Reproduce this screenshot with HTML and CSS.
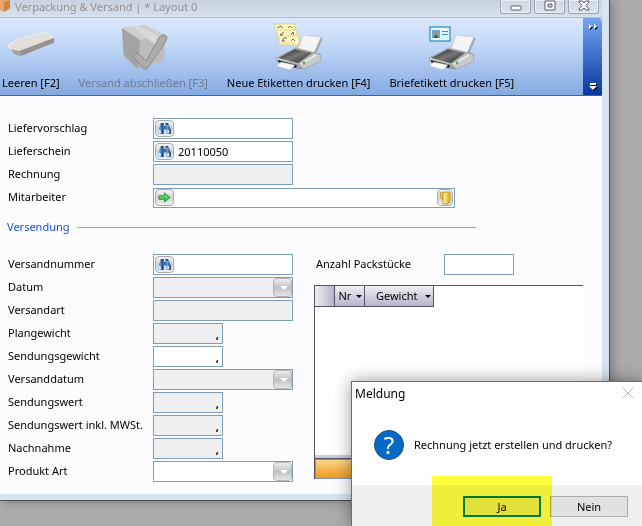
FILE: index.html
```
<!DOCTYPE html>
<html lang="de">
<head>
<meta charset="utf-8">
<title>Verpackung &amp; Versand</title>
<link rel="stylesheet" href="styles.css">
</head>
<body>
<svg class="defs" aria-hidden="true">
  <defs>
    <linearGradient id="side" x1="0" y1="0" x2="1" y2="1"><stop offset="0" stop-color="#f4f4f4"/><stop offset="1" stop-color="#7d7d7d"/></linearGradient>
    <linearGradient id="glass" x1="0" y1="0" x2="1" y2="1"><stop offset="0" stop-color="#1d1d1d"/><stop offset=".5" stop-color="#777"/><stop offset="1" stop-color="#222"/></linearGradient>
    <linearGradient id="barrel" x1="0" y1="0" x2="1" y2="0"><stop offset="0" stop-color="#b9d3e8"/><stop offset=".4" stop-color="#5f93c4"/><stop offset="1" stop-color="#1b4170"/></linearGradient>
    <linearGradient id="gold" x1="0" y1="0" x2="1" y2="0"><stop offset="0" stop-color="#fff7a8"/><stop offset="1" stop-color="#e9b91e"/></linearGradient>
    <linearGradient id="green" x1="0" y1="0" x2="0" y2="1"><stop offset="0" stop-color="#8ee58a"/><stop offset="1" stop-color="#1fae35"/></linearGradient>
    <symbol id="printer" viewBox="0 0 48 36">
      <path d="M29 1 48 3 41 19 24 15Z" fill="#777" opacity=".5"/>
      <path d="M28 0 46 2 39 18 23 14Z" fill="#f5f5f5" stroke="#bdbdbd" stroke-width=".6"/>
      <path d="M1 23 21 13 45 19 46 26 28 34 21 33 2 26Z" fill="url(#side)" stroke="#777" stroke-width=".5"/>
      <path d="M3 23 20 14 37 18 23 28Z" fill="url(#glass)"/>
      <path d="M24 29 40 18 45 20 46 26 28 34Z" fill="#c9c9c9"/>
      <path d="M26 29 41 20" stroke="#f8f8f8" stroke-width="1.3"/>
      <path d="M3 25 22 30 21 33 3 27Z" fill="#222"/>
      <path d="M6 27 20 30 15 35 1 31Z" fill="#fafafa" stroke="#aaa" stroke-width=".5"/>
      <circle cx="29" cy="28" r="1.400" fill="#61a650"/>
    </symbol>
    <symbol id="binoculars" viewBox="0 0 16 14">
      <path d="M4 2 5 1h2v12H1V8z" fill="url(#barrel)"/>
      <path d="M9 1h2l1 1 3 6v5h-5z" fill="url(#barrel)"/>
      <path d="M7 4h3v4H7z" fill="#2d669c"/>
      <path d="M4 1h3v2H4zM9 1h3v2H9z" fill="#1f4e80"/>
      <path d="M2 9h2v3H2zM11 9h2v3h-2z" fill="#edf5fb"/>
      <path d="M5 8h2v5H5z" fill="#1c52d4"/>
    </symbol>
  </defs>
</svg>

<main class="window">
  <header class="titlebar">
    <svg class="app-icon" viewBox="0 0 10 12" aria-hidden="true"><path d="M0 0h10v8l-6 4-4-2z" fill="#e8a66c"/><path d="M4 2 10 0v8l-6 4z" fill="#d18344"/></svg>
    <h1>Verpackung &amp; Versand | * Layout 0</h1>
    <div class="controls">
      <button type="button" aria-label="Minimieren"><svg viewBox="0 0 14 12"><rect x="2" y="6" width="10" height="4" rx="1"/></svg></button>
      <button type="button" aria-label="Maximieren"><svg viewBox="0 0 14 12"><path d="M2 1h10v9H2zM5 4v3h4V4z" fill-rule="evenodd"/></svg></button>
      <button type="button" aria-label="Schließen"><svg viewBox="0 0 14 12"><path d="M2 1h3l2 2 2-2h3v1L9 5.500 12 9v1H9L7 8l-2 2H2V9l3-3.500L2 2z"/></svg></button>
    </div>
  </header>

  <div class="toolbar">
    <div class="tools">
      <button type="button" class="tool">
        <svg viewBox="0 0 50 50"><path d="M2 24 33 10 49 16 18 32Z" fill="#777" opacity=".25"/><path d="M2 22 11 17 38 9 48 15 16 28 3 25Z" fill="#e2deda" stroke="#f6f3ef" stroke-width=".8"/><path d="M5 26 13 28 48 15 48 20 14 33 8 31Z" fill="#a5a19c"/><path d="M14 28 48 15 48 19 15 33Z" fill="#96938f"/></svg>
        <span>Leeren [F2]</span>
      </button>
      <button type="button" class="tool" disabled>
        <svg viewBox="0 0 50 50"><path d="M4 5 27 2 47 12 46 38 20 46 5 33Z" fill="#bcbcbc"/><path d="M4 5 27 2 47 12 22 17Z" fill="#cecece"/><path d="M4 5 22 17 20 46 6 33Z" fill="#a3a3a3"/><path d="M15 4 21 3 40 13 38 22 31 17Z" fill="#d9d9d9"/><path d="M16 32Q19 28 23 33L28 38 41 15Q45 9 49 14Q49 17 46 21L31 43Q28 48 25 45L17 36Q14 34 16 32Z" fill="#acacac" stroke="#8a8a8a"/></svg>
        <span>Versand abschließen [F3]</span>
      </button>
      <button type="button" class="tool">
        <svg viewBox="0 0 50 50"><g fill="#fff8bc" stroke="#cbbd7d" stroke-width=".6"><rect x="1" y="1" width="20" height="9"/><rect x="3" y="7" width="20" height="9"/><rect x="5" y="13" width="20" height="9"/></g><path d="M3 5l4-2 2 2M14 5l2-2 2 2M6 12l4-3M6 12h3M17 12l2-3 1 3M8 18l2-3h3M8 18h3M17 18l2-2 2 2" fill="none" stroke="#41426f" stroke-width=".8"/><path d="M7 20h14" stroke="#dab67a" stroke-width=".6"/><use href="#printer" x="1" y="12" width="48" height="36"/></svg>
        <span>Neue Etiketten drucken [F4]</span>
      </button>
      <button type="button" class="tool">
        <svg viewBox="0 0 50 50"><use href="#printer" x="1" y="12" width="48" height="36"/><rect x="3" y="4" width="20" height="14" fill="#e2f4fc" stroke="#087ba7"/><rect x="5" y="7" width="8" height="8" fill="#65add0"/><circle cx="9" cy="10" r="2" fill="#b68865"/><path d="M7 15q0-3 2-3t2 3z" fill="#405471"/><path d="M15 8.500h6M15 11.500h6" stroke="#3493c3"/></svg>
        <span>Briefetikett drucken [F5]</span>
      </button>
    </div>
    <button type="button" class="overflow" aria-label="Weitere Schaltflächen">
      <svg viewBox="0 0 8 5"><path d="M0 0 3 2.500 0 5zM5 0 8 2.500 5 5z"/></svg>
      <svg viewBox="0 0 8 8"><path d="M1 0h6v2H1zM0 3h8L4 7z"/></svg>
    </button>
  </div>

  <form class="content">
    <div class="fields">
      <label for="vorschlag">Liefervorschlag</label>
      <div class="field"><button type="button" class="mini" aria-label="Liefervorschlag suchen"><svg><use href="#binoculars"/></svg></button><input id="vorschlag"></div>
      <label for="lieferschein">Lieferschein</label>
      <div class="field"><button type="button" class="mini" aria-label="Lieferschein suchen"><svg><use href="#binoculars"/></svg></button><input id="lieferschein" value="20110050"></div>
      <label for="rechnung">Rechnung</label>
      <div class="field off"><input id="rechnung" readonly></div>
      <label for="mitarbeiter">Mitarbeiter</label>
      <div class="field wide"><button type="button" class="mini" aria-label="Mitarbeiter öffnen"><svg viewBox="0 0 16 14"><path d="M2 5h6V2l6 5-6 5V9H2z" fill="url(#green)" stroke="#168a2a" stroke-width=".8"/></svg></button><input id="mitarbeiter"><button type="button" class="mini narrow" aria-label="Mitarbeiter wählen"><svg viewBox="0 0 12 14"><path d="M1 2 4 1v7L2 7z" fill="#f6dd60" stroke="#b58a0c" stroke-width=".8"/><path d="M4 3 6 1h5v10l-2 2H4z" fill="url(#gold)" stroke="#b58a0c" stroke-width=".8"/><path d="M9 3v10" stroke="#c79d17" stroke-width=".6"/></svg></button></div>
    </div>

    <h2>Versendung</h2>

    <div class="shipping">
      <div class="fields">
        <label for="nummer">Versandnummer</label>
        <div class="field"><button type="button" class="mini" aria-label="Versandnummer suchen"><svg><use href="#binoculars"/></svg></button><input id="nummer"></div>
        <label for="datum">Datum</label>
        <div class="field off drop"><select id="datum"><option></option></select></div>
        <label for="versandart">Versandart</label>
        <div class="field off"><input id="versandart" readonly></div>
        <label for="plan">Plangewicht</label>
        <div class="field off number"><input id="plan" value="," readonly></div>
        <label for="gewicht">Sendungsgewicht</label>
        <div class="field number"><input id="gewicht" value=","></div>
        <label for="versanddatum">Versanddatum</label>
        <div class="field off drop"><select id="versanddatum"><option></option></select></div>
        <label for="wert">Sendungswert</label>
        <div class="field off number"><input id="wert" value="," readonly></div>
        <label for="brutto">Sendungswert inkl. MWSt.</label>
        <div class="field off number"><input id="brutto" value="," readonly></div>
        <label for="nachnahme">Nachnahme</label>
        <div class="field off number"><input id="nachnahme" value="," readonly></div>
        <label for="produkt">Produkt Art</label>
        <div class="field drop"><select id="produkt"><option></option></select></div>
      </div>
      <section class="packages">
        <div class="count">
          <label for="anzahl">Anzahl Packstücke</label>
          <div class="field"><input id="anzahl"></div>
        </div>
        <div class="list">
          <table>
            <thead><tr><td></td><th class="nr">Nr</th><th class="weight">Gewicht</th></tr></thead>
          </table>
          <div class="new-row"></div>
        </div>
      </section>
    </div>
  </form>
</main>

<section class="dialog" role="dialog" aria-labelledby="dialog-title">
  <header>
    <h2 id="dialog-title">Meldung</h2>
    <button type="button" aria-label="Schließen"><svg viewBox="0 0 12 12"><path d="M1 1 11 11M11 1 1 11" stroke="#bbb" fill="none"/></svg></button>
  </header>
  <div class="message">
    <span class="question">?</span>
    <p>Rechnung jetzt erstellen und drucken?</p>
  </div>
  <footer>
    <button type="button" class="default">Ja</button>
    <button type="button">Nein</button>
  </footer>
  <div class="marker"></div>
</section>
</body>
</html>
```

FILE: styles.css
```
* { box-sizing: border-box; }

body {
  margin: 0;
  min-height: 100vh;
  overflow: hidden;
  background: #ababab;
  color: #000;
  font: 11px/14px "Noto Sans", sans-serif;
}

h1, h2, p { margin: 0; font-size: 11px; font-weight: normal; }

button, input, select { font: inherit; color: inherit; padding: 0; margin: 0; }

.defs { position: absolute; width: 0; height: 0; }

.window {
  margin-right: 32px;
  padding: 0 7px 6px 0;
  background: #d7e4f1;
  border-right: 1px solid #4b4c50;
  border-bottom: 1px solid #4b4c50;
  box-shadow: 2px 0 10px rgba(0, 0, 0, 0.3);
}

.titlebar {
  display: flex;
  align-items: flex-start;
  height: 17px;
  background: linear-gradient(#c7d3de, #d6e1ec);
}

.app-icon { width: 10px; height: 12px; margin-right: 5px; }

h1 { flex: 1; line-height: 14px; color: #8e9297; }

.controls { display: flex; gap: 3px; margin-right: 3px; }

.controls button {
  width: 31px;
  height: 14px;
  border: 1px solid #9aa5b3;
  border-top: 0;
  border-radius: 0 0 3px 3px;
  background: linear-gradient(#ccd7e2, #dbe5ef);
  box-shadow: inset 0 0 0 1px #e8eef4;
}

.controls svg { display: block; width: 14px; height: 12px; margin: -2px auto 0; fill: #fff; stroke: #555a66; }

.toolbar {
  display: flex;
  height: 79px;
  border-top: 1px solid #a5c1ed;
  border-bottom: 1px solid #3b64a8;
  background: linear-gradient(#dbe9fc, #c3d8f7 35%, #84aae2);
}

.tools { flex: 1; display: flex; gap: 19px; padding-left: 2px; }

.tool {
  display: flex;
  flex-direction: column;
  align-items: center;
  gap: 2px;
  padding-top: 5px;
  border: 0;
  background: none;
  line-height: 16px;
  white-space: nowrap;
}

.tool:disabled { color: #6e7b90; }
.tool svg { width: 50px; height: 50px; }

.overflow {
  display: flex;
  flex-direction: column;
  justify-content: space-between;
  align-items: center;
  width: 19px;
  padding: 6px 0 4px;
  border: 0;
  border-radius: 0 4px 0 0;
  background: linear-gradient(#75a5f0, #3c6ecb 50%, #08389a);
}

.overflow svg { width: 8px; height: 8px; fill: #fff; filter: drop-shadow(1px 1px 0 #000); }
.overflow svg:first-child { height: 5px; }

.content { padding: 22px 0 12px; background: #fcfcff; }

.content label { padding-bottom: 2px; }

.fields {
  display: grid;
  grid-template-columns: 145px 302px;
  grid-auto-rows: 21px;
  gap: 2px 0;
  align-items: center;
  padding-left: 8px;
}

.field {
  display: flex;
  align-items: center;
  width: 140px;
  height: 21px;
  padding: 0 1px;
  border: 1px solid #7f9db9;
  background: #fff;
}

.field.wide { width: 302px; height: 20px; }
.field.number { width: 70px; }
.field.off { background: #f0f0f0; }

.field input, .field select {
  flex: 1;
  min-width: 0;
  height: 100%;
  border: 0;
  outline: 0;
  background: none;
  appearance: none;
}

.field input { padding: 0 4px; }
.number input { padding: 2px 2px 0; text-align: right; font-weight: bold; }

.mini, .drop::after {
  width: 19px;
  height: 17px;
  border: 1px solid #aaa;
  border-radius: 4px;
  background: linear-gradient(#f5f5f5, #d2d2d2 50%, #f0f0f0);
}

.mini svg { display: block; width: 15px; height: 13px; margin: auto; }
.mini.narrow { width: 16px; }
.mini.narrow svg { width: 12px; height: 14px; }

.drop { position: relative; padding-right: 0; }

.drop::after {
  content: "";
  width: 17px;
  border-color: #b4b4b4;
  background: linear-gradient(#eee, #c0c0c0 50%, #e8e8e8);
  pointer-events: none;
}

.drop::before {
  content: "";
  position: absolute;
  right: 4px;
  top: 8px;
  border: 4px solid transparent;
  border-top-color: #fff;
  border-bottom: 0;
  z-index: 1;
  pointer-events: none;
}

.content h2 {
  display: flex;
  align-items: center;
  width: 476px;
  max-width: 100%;
  margin: 12px 0 20px;
  padding-left: 7px;
  color: #1b4fd0;
}

.content h2::after { content: ""; flex: 1; height: 1px; margin-left: 7px; background: #aca29a; }

.shipping { display: flex; }
.shipping .fields { grid-template-columns: 145px 161px; }

.packages { flex: 1; display: flex; flex-direction: column; margin-right: 19px; }
.count { display: flex; align-items: center; padding-left: 2px; }
.count label { width: 128px; }
.count .field { width: 70px; }

.list {
  flex: 1;
  display: flex;
  flex-direction: column;
  justify-content: space-between;
  margin: 10px 0 3px;
  border: solid #55555d;
  border-width: 1px 0 0 1px;
  background: #fff;
}

table { width: 119px; border-collapse: collapse; table-layout: fixed; }

th, td {
  height: 20px;
  padding: 0 2px 0 4px;
  border-right: 1px solid #55536a;
  border-bottom: 1px solid #55536a;
  background: linear-gradient(#eeeef3, #b6b5cb);
  font-weight: normal;
}

td { width: 19px; background: linear-gradient(90deg, #f0f0f5, #b4b3ca); }
.nr { width: 30px; text-align: left; }

th::after {
  content: "";
  float: right;
  margin-top: 6px;
  border: 3px solid transparent;
  border-top-color: #000;
  border-bottom: 0;
}

.new-row {
  height: 20px;
  border: solid #8093b0;
  border-width: 1px 0 1px 1px;
  background: linear-gradient(#fbd786, #f0981f);
  box-shadow: 0 -1px #55536a, 0 -4px #cdcdd8;
}

.dialog {
  position: absolute;
  right: 0;
  bottom: 0;
  width: 291px;
  background: #fff;
  border: solid #1883d7;
  border-width: 1px 0 0 1px;
  box-shadow: 0 0 16px rgba(0, 0, 0, 0.4);
}

.dialog header { display: flex; justify-content: space-between; padding: 4px 8px 0 3px; }
.dialog h2 { font-size: 12px; line-height: 16px; }
.dialog header button { width: 12px; height: 14px; border: 0; background: none; }
.dialog header svg { display: block; width: 12px; height: 12px; }

.message { display: flex; align-items: center; gap: 10px; padding: 28px 0 25px 22px; }
.message p { white-space: nowrap; }

.question {
  width: 30px;
  height: 30px;
  border: 1px solid #154f83;
  border-radius: 50%;
  background: #0669c5;
  color: #fff;
  font-size: 24px;
  line-height: 28px;
  text-align: center;
}

.dialog footer {
  display: flex;
  justify-content: flex-end;
  gap: 9px;
  padding: 11px 14px 9px;
  background: #f0f0f0;
}

.dialog footer button { width: 78px; height: 21px; border: 1px solid #adadad; background: #e1e1e1; }
.dialog footer .default { border: 2px solid #0078d7; }

.marker {
  position: absolute;
  left: 80px;
  bottom: 0;
  width: 120px;
  height: 50px;
  background: #ffff40;
  mix-blend-mode: multiply;
  pointer-events: none;
}
```
